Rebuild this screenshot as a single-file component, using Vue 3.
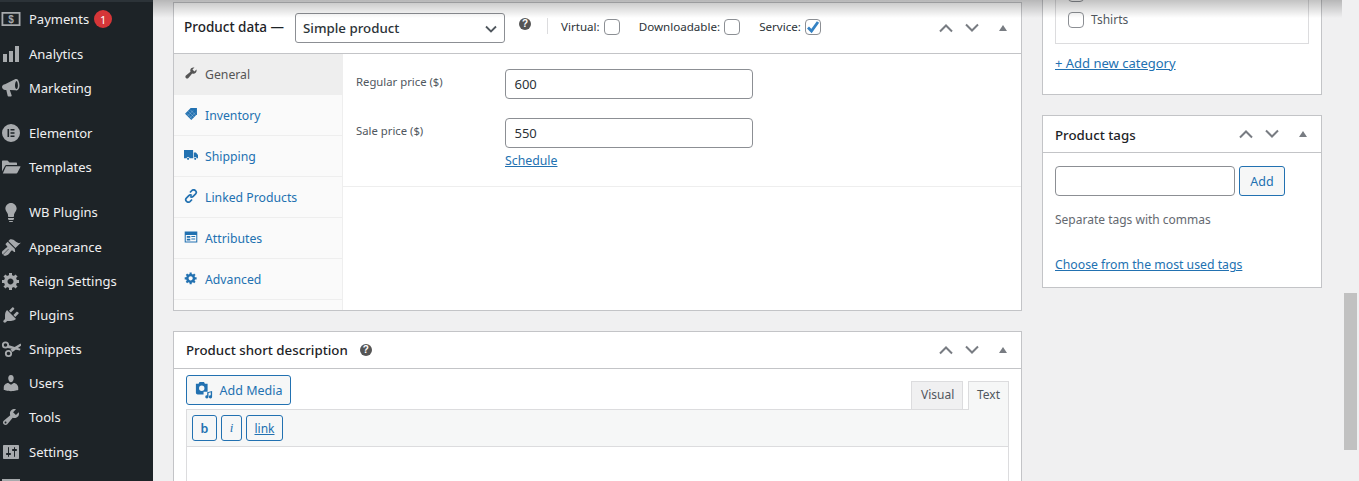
<script setup>
const menu = [
  { label: 'Payments', tall: true, badge: '1', d: 'M0.500 3h19v14h-19zM2.300 4.800v10.400h15.400V4.800z', dollar: true },
  { label: 'Analytics', d: 'M18 18V2h-4v16h4zm-6 0V7H8v11h4zm-6 0v-8H2v8h4z' },
  { label: 'Marketing', sep: true, d: 'M18.500 7.500c0 2.800-1.300 5-3 5-.3 0-.6-.1-.9-.2L8.800 12l1.900 5.600c.1.400-.2.900-.6.900H7.400c-.3 0-.6-.2-.7-.5L5.300 12H4.300C2.500 12 1 10.500 1 9s1.200-2.500 3-2.800l9.500-4.800c.6-.3 1.200-.4 2-.4 1.700 0 3 3.600 3 6.500zm-3 3.600c.8 0 1.400-1.600 1.400-3.600s-.6-4.600-1.400-4.600-1.500 2.600-1.500 4.600.7 3.600 1.500 3.600z' },
  { label: 'Elementor', d: 'M10 1a9 9 0 1 0 0 18 9 9 0 0 0 0-18zM6.500 6h1.600v8H6.500zM9.500 6h4v1.600h-4zM9.500 9.200h4v1.600h-4zM9.500 12.400h4V14h-4z' },
  { label: 'Templates', sep: true, d: 'M1 4.500c0-.6.400-1 1-1h4.500l2 2H15c.6 0 1 .4 1 1V8H5.500c-.6 0-1.100.3-1.400.8L1 14.500zM5 9.200h14c.4 0 .6.400.4.800l-3 5.800c-.2.400-.6.700-1 .7H1.800z' },
  { label: 'WB Plugins', tall: true, d: 'M10 1c3.110 0 5.630 2.520 5.630 5.620 0 1.840-2.030 4.580-2.030 4.580-.33.44-.6 1.250-.6 1.800v1c0 .55-.45 1-1 1H8c-.55 0-1-.45-1-1v-1c0-.55-.27-1.360-.6-1.800 0 0-2.020-2.740-2.020-4.580C4.380 3.520 6.890 1 10 1zM7 16.870V16h6v.87c0 .62-.13 1.130-1.250 1.130h-3.500C7.130 18 7 17.490 7 16.870zM12 19c0 .55-.45 1-1 1H9c-.55 0-1-.45-1-1h4z' },
  { label: 'Appearance', d: 'M14.480 11.060L7.410 3.990l1.500-1.500c.5-.56 2.300-.47 3.510.32 1.210.8 1.430 1.280 2.910 2.100 1.180.64 2.450 1.260 4.450.85zm-.71.71L6.700 4.700 4.930 6.470c-.39.39-.39 1.020 0 1.410l1.060 1.060c.39.39.39 1.030 0 1.420-.6.6-1.430 1.110-2.210 1.690-.35.26-.7.53-1.010.84C1.430 13.230.4 15.520 1.160 16.840l.66.66 5.480-5.480c.1-.1.25-.1.35 0 .1.1.1.25 0 .35l-5.480 5.480.66.66c1.320.76 3.610-.27 4.950-1.610.31-.31.58-.66.84-1.010.58-.78 1.090-1.610 1.690-2.210.39-.39 1.030-.39 1.420 0l1.060 1.060c.39.39 1.020.39 1.410 0z' },
  { label: 'Reign Settings', d: 'M18 12h-2.180c-.17.7-.44 1.350-.81 1.930l1.540 1.540-2.100 2.100-1.540-1.540c-.58.36-1.230.63-1.910.79V19H8v-2.180c-.68-.16-1.330-.43-1.910-.79l-1.540 1.540-2.120-2.120 1.540-1.540c-.36-.58-.63-1.230-.79-1.910H1V9.030h2.170c.16-.7.44-1.350.8-1.940L2.430 5.550l2.100-2.100 1.540 1.540c.58-.37 1.240-.64 1.930-.81V2h3v2.180c.68.16 1.330.43 1.910.79l1.540-1.540 2.120 2.120-1.540 1.540c.36.59.64 1.240.8 1.940H18V12zm-8.500 1.500c1.660 0 3-1.340 3-3s-1.340-3-3-3-3 1.340-3 3 1.340 3 3 3z' },
  { label: 'Plugins', d: 'M13.110 4.360L9.870 7.600 8 5.730l3.240-3.240c.35-.34 1.050-.2 1.560.32.52.51.66 1.210.31 1.550zm-8 1.770l.91-1.120 9.010 9.010-1.190.84c-.71.71-2.630 1.160-3.820 1.160H6.140L4.900 17.260c-.59.59-1.540.59-2.120 0-.59-.58-.59-1.530 0-2.120l1.240-1.240v-3.880c0-1.130.4-3.190 1.090-3.890zm7.260 3.970l3.240-3.240c.34-.35 1.040-.21 1.550.31.52.51.66 1.210.31 1.550l-3.240 3.250z' },
  { label: 'Snippets', scissors: true },
  { label: 'Users', d: 'M10 9.250c-2.270 0-2.730-3.440-2.730-3.440C7 4.020 7.820 2 9.970 2c2.160 0 2.980 2.020 2.710 3.810 0 0-.41 3.440-2.68 3.440zm0 2.570L12.720 10c2.390 0 4.520 2.330 4.520 4.530v2.490s-3.650 1.130-7.240 1.130c-3.650 0-7.240-1.130-7.240-1.130v-2.490c0-2.250 1.940-4.480 4.470-4.480z' },
  { label: 'Tools', tall: true, d: 'M16.680 9.770c-1.340 1.340-3.300 1.670-4.950.99l-5.410 6.520c-.99.99-2.590.99-3.580 0s-.99-2.590 0-3.580l6.520-5.410c-.68-1.650-.35-3.610.99-4.950 1.280-1.280 3.120-1.620 4.720-1.060l-2.890 2.890 2.820 2.820 2.860-2.860c.55 1.590.2 3.420-1.080 4.650zM3.810 16.210c.4.39 1.040.39 1.430 0 .4-.4.4-1.040 0-1.430-.39-.4-1.030-.4-1.430 0-.39.39-.39 1.030 0 1.430z' },
  { label: 'Settings', d: 'M18 16V4c0-.55-.45-1-1-1H3c-.55 0-1 .45-1 1v12c0 .55.45 1 1 1h14c.55 0 1-.45 1-1zM8 11h1c.55 0 1 .45 1 1s-.45 1-1 1H8v1.500c0 .28-.22.5-.5.5s-.5-.22-.5-.5V13H6c-.55 0-1-.45-1-1s.45-1 1-1h1V5.500c0-.28.22-.5.5-.5s.5.22.5.5V11zm5-2h-1c-.55 0-1-.45-1-1s.45-1 1-1h1V5.500c0-.28.22-.5.5-.5s.5.22.5.5V7h1c.55 0 1 .45 1 1s-.45 1-1 1h-1v5.500c0 .28-.22.5-.5.5s-.5-.22-.5-.5V9z' },
  { label: '', d: 'M1 3h18v14H1zM3 5v10h14V5z' },
]
const tabs = [
  { label: 'General', active: true, d: 'M16.680 9.770c-1.340 1.340-3.300 1.670-4.950.99l-5.410 6.520c-.99.99-2.590.99-3.580 0s-.99-2.590 0-3.580l6.520-5.410c-.68-1.650-.35-3.610.99-4.950 1.280-1.280 3.120-1.620 4.720-1.060l-2.890 2.890 2.820 2.820 2.860-2.860c.55 1.590.2 3.420-1.080 4.650z' },
  { label: 'Inventory', tag: true, d: 'M9.500 1.500 H18.500 V10.500 L10.500 18.500 1.500 9.500z' },
  { label: 'Shipping', d: 'M0 3h13v11.500H8a2.200 2.200 0 0 0-4.300 0H0zM14 6.500h3l3 3.500v4.500h-1.800a2.200 2.200 0 0 0-4.200 0zM5.800 14a1.500 1.500 0 1 1 0 3 1.500 1.500 0 0 1 0-3zM16 14a1.500 1.500 0 1 1 0 3 1.500 1.500 0 0 1 0-3z' },
  { label: 'Linked Products', link: true },
  { label: 'Attributes', d: 'M1 2h18v16H1zM2.500 7v9.500h15V7zM4 8.500h5V11H4zM10.500 8.500H16V10h-5.500zM4 12.500h5V15H4zM10.500 12H16v1.500h-5.500z' },
  { label: 'Advanced', d: 'M18 12h-2.180c-.17.7-.44 1.350-.81 1.930l1.540 1.540-2.100 2.100-1.540-1.540c-.58.36-1.230.63-1.910.79V19H8v-2.180c-.68-.16-1.330-.43-1.910-.79l-1.540 1.540-2.120-2.120 1.540-1.540c-.36-.58-.63-1.230-.79-1.910H1V9.030h2.170c.16-.7.44-1.350.8-1.940L2.430 5.550l2.100-2.100 1.540 1.540c.58-.37 1.240-.64 1.930-.81V2h3v2.180c.68.16 1.330.43 1.910.79l1.540-1.540 2.120 2.120-1.540 1.540c.36.59.64 1.240.8 1.940H18V12zm-8.500 1.500c1.660 0 3-1.340 3-3s-1.340-3-3-3-3 1.340-3 3 1.340 3 3 3z' },
]
const flags = [
  { label: 'Virtual:', checked: false },
  { label: 'Downloadable:', checked: false },
  { label: 'Service:', checked: true },
]
</script>

<template>
  <div class="page">
    <aside class="sidebar">
      <div class="topstrip"></div>
      <div v-for="item in menu" :key="item.label" class="mitem" :class="{ sep: item.sep, tall: item.tall }">
        <span class="micon">
          <svg v-if="item.scissors" viewBox="0 0 20 20" width="20" height="20" fill="#a7aaad">
            <circle cx="4.500" cy="6" r="2.700" fill="none" stroke="#a7aaad" stroke-width="1.800" />
            <circle cx="7.500" cy="14.500" r="2.700" fill="none" stroke="#a7aaad" stroke-width="1.800" />
            <path d="M9.500 10.500 19.500 4.500 20.500 6.500 11.500 13zM7.200 6 19.500 9.700 19 11.500 6.800 9z" />
          </svg>
          <svg v-else viewBox="0 0 20 20" width="20" height="20" fill="#a7aaad" fill-rule="evenodd">
            <path :d="item.d" />
            <text v-if="item.dollar" x="10" y="14.300" text-anchor="middle" class="dollar">$</text>
          </svg>
        </span>
        <span class="mlabel">{{ item.label }}</span>
        <span v-if="item.badge" class="badge">{{ item.badge }}</span>
      </div>
    </aside>

    <div class="content">
      <main class="col-main">
        <section class="box pdata">
          <header class="pd-head">
            <span class="pd-title">Product data —</span>
            <span class="select">Simple product
              <svg class="sel-arrow" viewBox="0 0 12 8" width="12" height="8" fill="none" stroke="#50575e" stroke-width="1.800"><path d="M1 1.500 6 6.500 11 1.500" /></svg>
            </span>
            <span class="help pd-help">?</span>
            <span class="vline"></span>
            <label v-for="f in flags" :key="f.label" class="flag">
              {{ f.label }}
              <span class="check">
                <svg v-if="f.checked" viewBox="0 0 16 16" width="16" height="16" fill="none" stroke="#3582c4" stroke-width="2.800"><path d="M3 8.500 6.500 12 13 3" /></svg>
              </span>
            </label>
            <span class="handles">
              <svg viewBox="0 0 16 10" width="16" height="10" fill="none" stroke="#787c82" stroke-width="2"><path d="M2 8.500 8 2.500 14 8.500" /></svg>
              <svg viewBox="0 0 16 10" width="16" height="10" fill="none" stroke="#787c82" stroke-width="2"><path d="M2 1.500 8 7.500 14 1.500" /></svg>
              <span class="tri"></span>
            </span>
          </header>
          <div class="pd-body">
            <nav class="tabs">
              <div v-for="t in tabs" :key="t.label" class="tab" :class="{ active: t.active }">
                <svg v-if="t.link" viewBox="0 0 20 20" width="14" height="14" fill="none" stroke="#2271b1" stroke-width="2.400">
                  <path d="M8.500 5 11.500 2c1.500-1.200 3.400-1 4.800.3s1.500 3.400.3 4.700l-3.500 3.500c-1.200 1.200-3 1.200-4.300.3M11.500 15 8.500 18c-1.500 1.200-3.400 1-4.800-.3S2.200 14.300 3.400 13l3.500-3.500c1.200-1.200 3-1.200 4.300-.3" />
                </svg>
                <svg v-else viewBox="0 0 20 20" width="14" height="14" :fill="t.active ? '#555' : '#2271b1'" fill-rule="evenodd">
                  <path :d="t.d" />
                  <path v-if="t.tag" d="M6 6 15 15M9 4 17 12M4 9 12 17M5 13 13 5M8 16 16 8" stroke="#fff" stroke-opacity=".45" stroke-width=".8" fill="none" />
                </svg>
                <span>{{ t.label }}</span>
              </div>
              <div class="tab-fill"></div>
            </nav>
            <div class="fields">
              <div class="fieldset">
                <div class="field">
                  <span class="flabel">Regular price ($)</span>
                  <span class="input price">600</span>
                </div>
                <div class="field sale">
                  <span class="flabel">Sale price ($)</span>
                  <span class="fstack">
                    <span class="input price">550</span>
                    <a class="link sched">Schedule</a>
                  </span>
                </div>
              </div>
            </div>
          </div>
        </section>

        <section class="box short">
          <header class="sd-head">
            <span class="h-title">Product short description</span>
            <span class="help sd-help">?</span>
            <span class="handles">
              <svg viewBox="0 0 16 10" width="16" height="10" fill="none" stroke="#787c82" stroke-width="2"><path d="M2 8.500 8 2.500 14 8.500" /></svg>
              <svg viewBox="0 0 16 10" width="16" height="10" fill="none" stroke="#787c82" stroke-width="2"><path d="M2 1.500 8 7.500 14 1.500" /></svg>
              <span class="tri"></span>
            </span>
          </header>
          <div class="editor">
            <div class="ed-top">
              <span class="btn media">
                <svg viewBox="0 0 20 20" width="18" height="18" fill="#2271b1" fill-rule="evenodd">
                  <path d="M1 3h3l1-2h5l1 2h3v9H9.500v3H3a2 2 0 0 1-2-2zM7.500 5a3 3 0 1 0 0 6 3 3 0 0 0 0-6z" />
                  <path d="M13.500 12.500 19 11v6.500a1.800 1.800 0 1 1-1.500-1.700v-3.200l-2.500.7v4.200a1.800 1.800 0 1 1-1.500-1.700z" />
                </svg>
                Add Media
              </span>
              <span class="modes">
                <span class="mode">Visual</span>
                <span class="mode on">Text</span>
              </span>
            </div>
            <div class="ed-wrap">
              <div class="toolbar">
                <span class="btn qt b">b</span>
                <span class="btn qt i">i</span>
                <span class="btn qt u">link</span>
              </div>
              <div class="ed-area"></div>
            </div>
          </div>
        </section>
      </main>

      <aside class="col-side">
        <section class="box cats">
          <div class="catlist">
            <div class="catrow clipped"><span class="check"></span></div>
            <div class="catrow"><span class="check"></span><span>Tshirts</span></div>
          </div>
          <a class="link addcat">+ Add new category</a>
        </section>
        <section class="box tags">
          <header class="tg-head">
            <span class="h-title tg-title">Product tags</span>
            <span class="handles">
              <svg viewBox="0 0 16 10" width="16" height="10" fill="none" stroke="#787c82" stroke-width="2"><path d="M2 8.500 8 2.500 14 8.500" /></svg>
              <svg viewBox="0 0 16 10" width="16" height="10" fill="none" stroke="#787c82" stroke-width="2"><path d="M2 1.500 8 7.500 14 1.500" /></svg>
              <span class="tri"></span>
            </span>
          </header>
          <div class="tg-body">
            <div class="tg-add">
              <span class="input tg-input"></span>
              <span class="btn tg-btn">Add</span>
            </div>
            <p class="hint">Separate tags with commas</p>
            <a class="link most">Choose from the most used tags</a>
          </div>
        </section>
      </aside>
    </div>

    <div class="topshadow"></div>
    <div class="thumb"></div>
  </div>
</template>

<style>
html, body { margin: 0; overflow: hidden; background: #f0f0f1; }
</style>

<style scoped>
.page {
  position: relative;
  display: flex;
  width: 1359px;
  height: 481px;
  overflow: hidden;
  background: #f0f0f1;
  font-family: "Noto Sans", "Open Sans", sans-serif;
  font-size: 12.500px;
  color: #50575e;
}
.sidebar {
  width: 153px;
  flex: none;
  background: #1d2327;
  color: #f0f0f1;
  overflow: hidden;
}
.topstrip { height: 2px; background: #2c3338; }
.mitem {
  display: flex;
  align-items: center;
  height: 34px;
  font-size: 13px;
}
.mitem.sep { margin-bottom: 11px; }
.mitem.tall { margin-bottom: 1px; }
.micon { width: 29px; flex: none; display: flex; padding-left: 1px; box-sizing: border-box; }
.mlabel { white-space: nowrap; }
.dollar { font: bold 10px "Liberation Sans", sans-serif; fill: #a7aaad; }
.badge {
  margin-left: 5px;
  width: 18px;
  height: 18px;
  border-radius: 50%;
  background: #d63638;
  color: #fff;
  font-size: 11px;
  display: flex;
  align-items: center;
  justify-content: center;
}
.content {
  flex: 1;
  display: flex;
  gap: 20px;
  padding-left: 20px;
  align-items: flex-start;
}
.box {
  background: #fff;
  border: 1px solid #c3c4c7;
  box-sizing: border-box;
}
.col-main { width: 849px; flex: none; padding-top: 2px; display: flex; flex-direction: column; gap: 20px; }
.pdata { height: 309px; display: flex; flex-direction: column; }
.pd-head {
  display: flex;
  align-items: center;
  height: 50px;
  flex: none;
  padding-left: 10px;
  border-bottom: 1px solid #c3c4c7;
  box-sizing: content-box;
  color: #1d2327;
}
.pd-title { font-weight: 500; font-size: 13.500px; white-space: nowrap; width: 111px; margin-top: -2px; }
.select {
  position: relative;
  width: 210px;
  height: 30px;
  box-sizing: border-box;
  border: 1px solid #8c8f94;
  border-radius: 3px;
  font-size: 13.300px;
  line-height: 28px;
  padding-left: 7px;
  color: #2c3338;
  font-weight: 500;
}
.sel-arrow { position: absolute; right: 7px; top: 11px; }
.help {
  width: 12px;
  height: 12px;
  border-radius: 50%;
  background: #555;
  color: #fff;
  font: bold 10px/12px "Liberation Sans", sans-serif;
  text-align: center;
  flex: none;
}
.pd-help { margin-left: 14px; margin-top: -8px; }
.vline { width: 1px; height: 16px; background: #dcdcde; margin: -4px 13px 0 16px; }
.flag {
  display: flex;
  align-items: center;
  gap: 4px;
  font-size: 11.600px;
  margin-right: 19px;
  margin-top: -3px;
  color: #2c3338;
  white-space: nowrap;
}
.check {
  width: 16px;
  height: 16px;
  border: 1px solid #8c8f94;
  border-radius: 4px;
  background: #fff;
  display: inline-block;
  box-sizing: border-box;
  flex: none;
  overflow: hidden;
}
.check svg { display: block; margin: -1px; }
.handles { display: flex; align-items: center; margin-left: auto; }
.handles svg { margin-right: 10px; }
.tri {
  width: 0;
  height: 0;
  margin-left: 9px;
  margin-right: 14px;
  border-left: 4px solid transparent;
  border-right: 4px solid transparent;
  border-bottom: 6px solid #787c82;
}
.pd-body { flex: 1; display: flex; min-height: 0; }
.tabs {
  width: 169px;
  flex: none;
  background: #fafafa;
  border-right: 1px solid #eee;
  box-sizing: border-box;
  display: flex;
  flex-direction: column;
}
.tab {
  height: 41px;
  box-sizing: border-box;
  border-bottom: 1px solid #eee;
  display: flex;
  align-items: center;
  gap: 7px;
  padding-left: 10px;
  color: #2271b1;
  font-size: 12.250px;
}
.tab svg { margin-top: -3px; }
.tab.active { background: #eee; color: #555; }
.tab-fill { flex: 1; }
.fields { flex: 1; }
.fieldset { padding: 15px 12px 18px; height: 133px; box-sizing: border-box; border-bottom: 1px solid #eee; }
.field { display: flex; align-items: flex-start; }
.sale { margin-top: 19px; }
.flabel { width: 149px; margin-left: 1px; font-size: 11.300px; flex: none; margin-top: 5px; }
.fstack { display: flex; flex-direction: column; }
.input {
  display: block;
  box-sizing: border-box;
  background: #fff;
  border: 1px solid #8c8f94;
  border-radius: 4px;
  color: #2c3338;
  font-size: 13px;
}
.price { width: 248px; height: 30px; line-height: 28px; padding-left: 8.500px; }
.link { color: #2271b1; text-decoration: underline; font-size: 12.300px; }
.sched { margin-top: 4px; }
.short { flex: none; height: 200px; }
.sd-head {
  display: flex;
  align-items: center;
  height: 36px;
  padding-left: 12px;
  border-bottom: 1px solid #c3c4c7;
  box-sizing: content-box;
  color: #1d2327;
}
.h-title { font-size: 13.300px; font-weight: 500; white-space: nowrap; color: #1d2327; }
.tg-title { margin-top: 2px; }
.sd-help { margin-left: 12px; margin-top: -1px; }
.editor { padding: 6px 12px 0; }
.ed-top { display: flex; justify-content: space-between; align-items: flex-end; height: 34px; }
.btn {
  display: inline-flex;
  align-items: center;
  justify-content: center;
  box-sizing: border-box;
  border: 1px solid #2271b1;
  border-radius: 3px;
  background: #f6f7f7;
  color: #2271b1;
  font-size: 12.500px;
}
.media { width: 105px; height: 30px; gap: 7px; align-self: flex-start; }
.modes { display: flex; gap: 5px; }
.mode {
  height: 28px;
  box-sizing: border-box;
  border: 1px solid #dcdcde;
  border-bottom: 0;
  background: #f0f0f1;
  color: #50575e;
  font-size: 12px;
  line-height: 26px;
  padding: 0 9px;
  width: 52px;
  text-align: center;
}
.mode.on { background: #f6f7f7; width: 41px; padding: 0; height: 29px; margin-bottom: -1px; position: relative; z-index: 1; }
.ed-wrap { border: 1px solid #dcdcde; border-bottom: 0; }
.toolbar {
  height: 37px;
  box-sizing: border-box;
  background: #f6f7f7;
  border-bottom: 1px solid #dcdcde;
  display: flex;
  align-items: center;
  gap: 4px;
  padding-left: 5px;
}
.qt { height: 26px; font-size: 11.500px; }
.qt.b { width: 25px; font-weight: 600; font-size: 12.500px; }
.qt.i { width: 21px; font-style: italic; font-family: "Liberation Serif", serif; font-size: 13px; }
.qt.u { width: 37px; text-decoration: underline; font-size: 12px; }
.ed-area { height: 60px; background: #fff; }
.col-side { width: 280px; flex: none; display: flex; flex-direction: column; gap: 20px; }
.cats { height: 95px; padding: 0 12px; border-top: 0; }
.catlist {
  height: 44px;
  box-sizing: border-box;
  border: 1px solid #dcdcde;
  border-top: 0;
  padding-left: 12px;
  margin-bottom: 10px;
  color: #50575e;
  font-size: 12px;
}
.catrow { display: flex; align-items: center; gap: 7px; }
.catrow.clipped { height: 0; }
.catrow.clipped .check { margin-top: -13px; }
.catrow:not(.clipped) { padding-top: 11px; }
.addcat { font-size: 13px; }
.tags { height: 173px; }
.tg-head {
  display: flex;
  align-items: center;
  height: 36px;
  padding-left: 12px;
  border-bottom: 1px solid #c3c4c7;
  box-sizing: content-box;
}
.tg-body { padding: 13px 12px 0; }
.tg-add { display: flex; gap: 4px; }
.tg-input { width: 180px; height: 30px; }
.tg-btn { width: 46px; height: 30px; }
.hint { margin: 15px 0 28px; font-size: 12px; color: #646970; }
.most { font-size: 12.250px; }
.topshadow {
  position: absolute;
  left: 153px;
  top: 0;
  width: 1189px;
  height: 18px;
  background: linear-gradient(to bottom, rgba(0,0,0,.24), rgba(0,0,0,0));
  pointer-events: none;
}
.thumb {
  position: absolute;
  left: 1344px;
  top: 293px;
  width: 13px;
  height: 157px;
  background: #c1c1c1;
}
</style>
